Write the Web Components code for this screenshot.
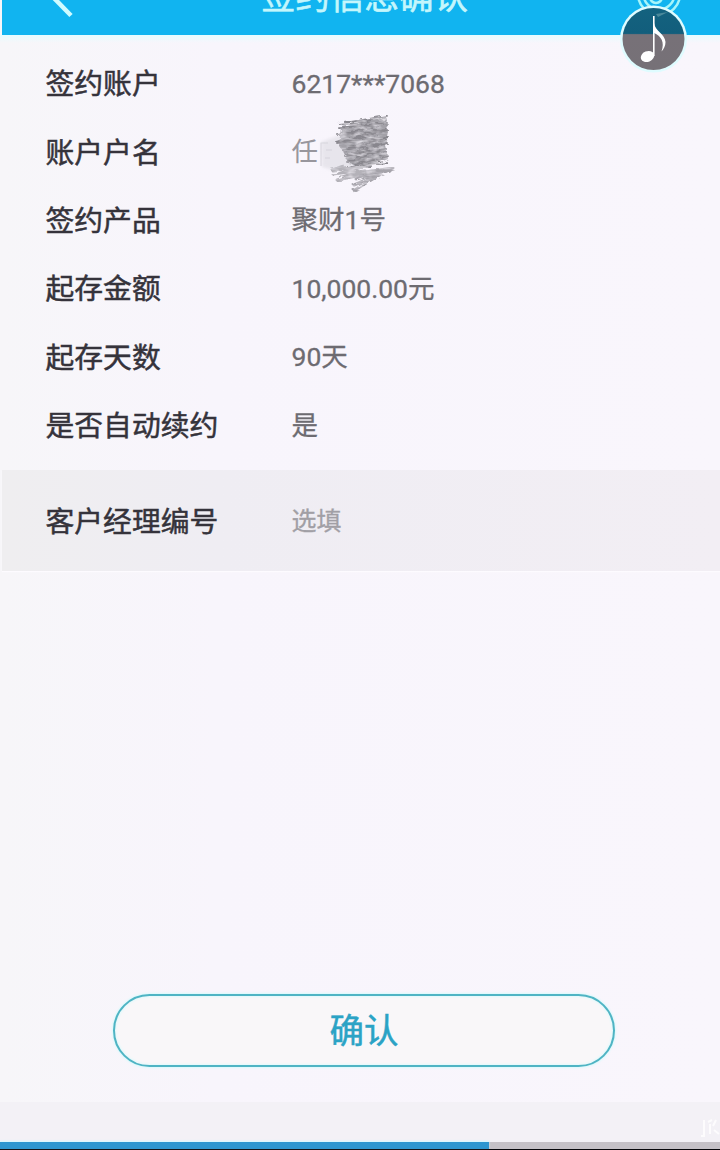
<!DOCTYPE html>
<html lang="zh-CN">
<head>
<meta charset="utf-8">
<title>签约信息确认</title>
<style>
  body {
    margin: 0;
    width: 720px;
    height: 1150px;
    overflow: hidden;
    background: #f8f6fc;
    font-family: Roboto, "Noto Sans CJK SC", sans-serif;
  }
</style>
</head>
<body>
<sign-page>
  <app-header slot="header">签约信息确认</app-header>
  <info-row label="签约账户">6217***7068</info-row>
  <info-row label="账户户名"><masked-name>任</masked-name></info-row>
  <info-row label="签约产品">聚财1号</info-row>
  <info-row label="起存金额">10,000.00元</info-row>
  <info-row label="起存天数">90天</info-row>
  <info-row label="是否自动续约">是</info-row>
  <info-row slot="manager" label="客户经理编号" optional>选填</info-row>
  <outline-button slot="action">确认</outline-button>
  <play-progress slot="footer"></play-progress>
  <music-badge slot="badge"></music-badge>
</sign-page>

<script>
class SignPage extends HTMLElement {
  constructor() {
    super();
    this.attachShadow({ mode: "open" });
    this.shadowRoot.innerHTML = `
      <style>
        :host {
          display: flex;
          flex-direction: column;
          box-sizing: border-box;
          position: relative;
          width: 720px;
          height: 1150px;
          background: linear-gradient(90deg, #f7f6f9, #f8f5fc 30%, #f9f6fc);
        }
        .rows {
          padding: 14px 0 11px;
          background: linear-gradient(#e6fcff, rgba(240, 252, 255, 0) 8px);
        }
        .manager {
          display: flex;
          align-items: center;
          height: 101px;
          margin-left: 2px;
          background: linear-gradient(90deg, #efeef0, #efedf3 30%, #f2eef4);
          box-shadow: 0 1px 1px #fdfbff;
        }
        .manager ::slotted(*) {
          margin-left: -2px;
        }
        .action {
          flex: 1;
          display: flex;
          align-items: flex-end;
          justify-content: center;
          padding: 0 0 35px 8px;
        }
      </style>
      <slot name="header"></slot>
      <div class="rows"><slot></slot></div>
      <div class="manager"><slot name="manager"></slot></div>
      <div class="action"><slot name="action"></slot></div>
      <slot name="footer"></slot>
      <slot name="badge"></slot>
    `;
  }
}

class AppHeader extends HTMLElement {
  constructor() {
    super();
    this.attachShadow({ mode: "open" });
    this.shadowRoot.innerHTML = `
      <style>
        :host {
          display: flex;
          flex: none;
          align-items: flex-end;
          justify-content: space-between;
          height: 35px;
          margin-left: 2px;
          overflow: hidden;
          background: #11b4f0;
          color: #c4f6fc;
        }
        svg {
          display: block;
          flex: none;
        }
        .title {
          font-size: 34.5px;
          line-height: 40px;
          padding-bottom: 18px;
          white-space: nowrap;
          -webkit-text-stroke: 0.6px #c4f6fc;
        }
      </style>
      <svg width="100" height="35" viewBox="0 0 100 35" fill="none" stroke="#d0fbff" stroke-width="4.5">
        <path d="M48 -6 L69 15.5"/>
      </svg>
      <div class="title"><slot></slot></div>
      <svg width="93" height="35" viewBox="0 0 93 35" fill="none" stroke="#a5f5fa" stroke-width="2.5">
        <circle cx="32" cy="-6" r="21"/>
        <circle cx="32" cy="-6" r="15.500"/>
        <circle cx="29" cy="-3" r="6"/>
      </svg>
    `;
  }
}

class InfoRow extends HTMLElement {
  #label;

  constructor() {
    super();
    this.attachShadow({ mode: "open" });
    this.shadowRoot.innerHTML = `
      <style>
        :host {
          display: grid;
          grid-template-columns: 246px 1fr;
          align-items: center;
          height: 68.4px;
          padding-left: 45.5px;
        }
        .label {
          padding-top: 2px;
          font-size: 28.8px;
          line-height: 40px;
          color: #35333b;
          -webkit-text-stroke: 0.5px #35333b;
        }
        .value {
          padding-top: 1px;
          font-size: 26.5px;
          line-height: 40px;
          color: #6d6b71;
          -webkit-text-stroke: 0.3px #6d6b71;
        }
        :host([optional]) .value {
          padding-top: 2px;
          font-size: 25px;
          color: #a19fa5;
          -webkit-text-stroke-color: #a19fa5;
        }
      </style>
      <div class="label"></div>
      <div class="value"><slot></slot></div>
    `;
    this.#label = this.shadowRoot.querySelector(".label");
  }

  static get observedAttributes() {
    return ["label"];
  }

  attributeChangedCallback(name, prevValue, newValue) {
    if (newValue === prevValue) return;
    this.#label.textContent = newValue;
  }
}

// Account holder name, hidden under pencil strokes after the first character
class MaskedName extends HTMLElement {
  constructor() {
    super();
    this.attachShadow({ mode: "open" });
    this.shadowRoot.innerHTML = `
      <style>
        :host {
          display: inline-block;
          position: relative;
          color: #98969d;
          -webkit-text-stroke: 0;
        }
        svg {
          position: absolute;
          left: 22px;
          top: -22px;
        }
      </style>
      <slot></slot>
      <svg width="90" height="84" viewBox="0 0 90 84" fill="none" stroke-linejoin="round">
        <defs>
          <filter id="grain" x="-5%" y="-5%" width="110%" height="110%">
            <feTurbulence type="fractalNoise" baseFrequency="0.12 0.3" numOctaves="2" seed="4" result="n"/>
            <feDisplacementMap in="SourceGraphic" in2="n" scale="5" result="d"/>
            <feColorMatrix in="n" type="matrix" values="0 0 0 0 0  0 0 0 0 0  0 0 0 0 0  1.5 0 0 0 0.1" result="a"/>
            <feComposite in="d" in2="a" operator="in" result="c"/>
            <feGaussianBlur in="c" stdDeviation="0.7"/>
          </filter>
          <filter id="soft"><feGaussianBlur stdDeviation="1.5"/></filter>
        </defs>
        <path d="M7 32 L26 25 L37 22 L40 58 L22 61 L8 57 Z" fill="#dddbe2" opacity=".6" filter="url(#soft)"/>
        <path d="M7 56 V33 H14 M12 40 H18 M11 48 H16" stroke="#c6c4cb" stroke-width="1.2" opacity=".5"/>
        <g filter="url(#grain)">
          <path d="M27 16 L72 8 L74 22 L71 35 L74 49 L52 57 L34 53 L30 43 L25 36 Z" fill="#a3a1a8"/>
          <path d="M25 14 L73 6 L25 18 L73 13 L24 25 L73 20 L23 33 L74 27 L28 40 L73 33 L31 46 L72 39 L33 52 L74 46 L34 57 L74 53" stroke="#88868d" stroke-width="2"/>
          <path d="M30 56 L18 60 L48 57 L20 65 L51 61 L23 70 L57 63" stroke="#b3b1b8" stroke-width="3"/>
          <path d="M51 62 L79 58 L42 69 L75 60 L40 75 L77 58 L39 81" stroke="#a5a3aa" stroke-width="3"/>
        </g>
      </svg>
    `;
  }
}

class OutlineButton extends HTMLElement {
  constructor() {
    super();
    this.attachShadow({ mode: "open" });
    this.shadowRoot.innerHTML = `
      <style>
        :host {
          display: block;
        }
        button {
          display: block;
          box-sizing: border-box;
          width: 502px;
          height: 73px;
          padding: 2px 0 0;
          border: 2px solid #4fb4c4;
          border-radius: 37px;
          background: #f9f7f9;
          box-shadow: 0 0 2px 1px #d9fafc, inset 0 0 2px 1px #e0fafc;
          color: #2ba3c5;
          font-family: inherit;
          font-size: 34.5px;
          line-height: 67px;
          -webkit-text-stroke: 0.5px #2ba3c5;
        }
      </style>
      <button type="button"><slot></slot></button>
    `;
  }
}

class PlayProgress extends HTMLElement {
  constructor() {
    super();
    this.attachShadow({ mode: "open" });
    this.shadowRoot.innerHTML = `
      <style>
        :host {
          display: flex;
          flex-direction: column;
          flex: none;
          height: 48px;
          background: #f3f1f6;
        }
        .mark {
          flex: 1;
          display: flex;
          justify-content: flex-end;
          align-items: flex-end;
        }
        .mark svg {
          display: block;
        }
        .track {
          height: 7px;
          background: #c5c1c7;
          border-bottom: 1px solid #08080c;
        }
        .played {
          width: 489px;
          height: 100%;
          background: #2e96d0;
          box-shadow: 0 -1px 2px #d5f8ff;
        }
      </style>
      <div class="mark">
        <svg width="22" height="26" viewBox="0 0 22 26" fill="none" stroke="#fff" stroke-width="2">
          <path d="M6 4 V20 H3 M10 6 L14 4 M12 8 V18 M18 4 L15 10 M16 14 L21 18" opacity=".8"/>
        </svg>
      </div>
      <div class="track"><div class="played"></div></div>
    `;
  }
}

class MusicBadge extends HTMLElement {
  constructor() {
    super();
    this.attachShadow({ mode: "open" });
    this.shadowRoot.innerHTML = `
      <style>
        :host {
          position: absolute;
          left: 619px;
          top: 5px;
        }
        svg {
          display: block;
        }
      </style>
      <svg width="69" height="69" viewBox="0 0 69 69">
        <defs>
          <linearGradient id="disc" x1="0" y1="0" x2="0" y2="1">
            <stop offset="0" stop-color="#14627f"/>
            <stop offset=".41" stop-color="#125e7c"/>
            <stop offset=".43" stop-color="#777178"/>
            <stop offset="1" stop-color="#767177"/>
          </linearGradient>
        </defs>
        <circle cx="34.5" cy="34" r="33.5" fill="#dffcff"/>
        <circle cx="34.5" cy="34" r="31" fill="url(#disc)"/>
        <path d="M37 9 L49 7 L39 12 Z" fill="#6fa4ae" opacity=".6"/>
        <path d="M34 11 H35.600 V51 H34 Z" fill="#fff"/>
        <path d="M35 18 C36 26 46 29 46.500 37 C46.500 41 44.500 44.500 42.500 46.500 C46 37 42 31 35 28 Z" fill="#fff"/>
        <ellipse cx="28.500" cy="51.500" rx="7" ry="5.300" transform="rotate(-22 28.500 51.500)" fill="#fff"/>
      </svg>
    `;
  }
}

customElements.define("sign-page", SignPage);
customElements.define("app-header", AppHeader);
customElements.define("info-row", InfoRow);
customElements.define("masked-name", MaskedName);
customElements.define("outline-button", OutlineButton);
customElements.define("play-progress", PlayProgress);
customElements.define("music-badge", MusicBadge);
</script>
</body>
</html>
